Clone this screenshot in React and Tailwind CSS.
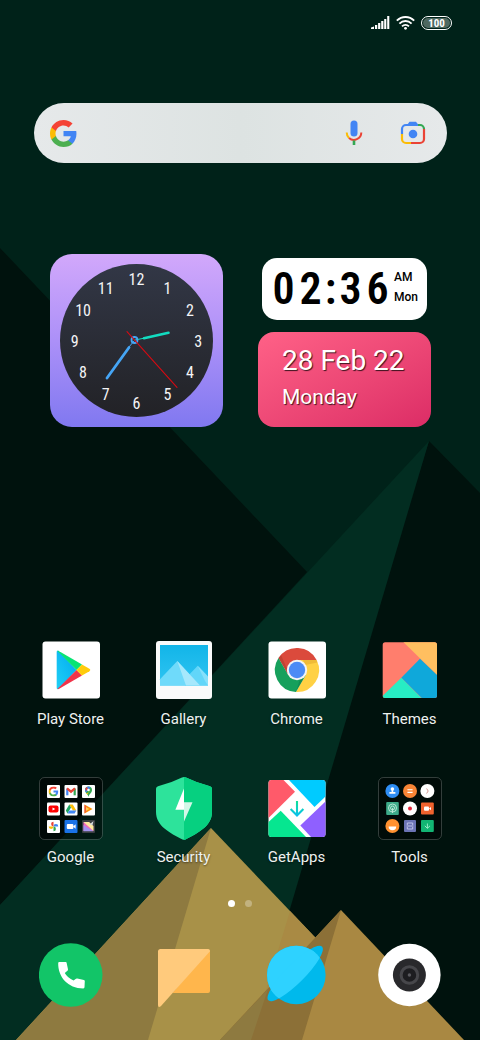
import { useState } from "react";

const hours = [1, 2, 3, 4, 5, 6, 7, 8, 9, 10, 11, 12];

const Wallpaper = () => (
    <svg
        className="absolute inset-0 h-full w-full"
        viewBox="0 0 480 1040"
        preserveAspectRatio="xMidYMid slice"
        aria-hidden="true"
    >
        <rect width="480" height="1040" fill="#002219" />
        <path d="M0 248L307 572L0 905Z" fill="#00120d" />
        <path d="M429 441L480 493V1040H240Z" fill="#00120d" />
        <path d="M429 441L0 905V1040H251Z" fill="#022d21" />
        {/* front mountain */}
        <path d="M211 828L413 1040H16Z" fill="#a89148" />
        <path d="M211 828L148 1040H16Z" fill="#8e7a40" />
        <path d="M290 911L413 1040H251Z" fill="#a98a44" />
        {/* small mountain */}
        <path d="M341 910L464 1040H220Z" fill="#a98842" />
        <path d="M341 910L302 1040H220Z" fill="#8c7037" />
        <path d="M268 989L251 1040H220Z" fill="#8e7a40" />
    </svg>
);

const GoogleG = ({ className, x, y, width, height }) => (
    <svg className={className} x={x} y={y} width={width} height={height} viewBox="1 1 22 22" aria-hidden="true">
        <path fill="#4285f4" d="M22.56 12.25c0-.78-.07-1.53-.2-2.25H12v4.26h5.92c-.26 1.37-1.04 2.53-2.21 3.31v2.77h3.57c2.08-1.92 3.28-4.74 3.28-8.09z" />
        <path fill="#4caf50" d="M12 23c2.97 0 5.46-.98 7.28-2.66l-3.57-2.77c-.98.66-2.23 1.06-3.71 1.06-2.86 0-5.29-1.93-6.16-4.53H2.18v2.84C3.99 20.53 7.7 23 12 23z" />
        <path fill="#fbbc05" d="M5.84 14.09c-.22-.66-.35-1.36-.35-2.09s.13-1.43.35-2.09V7.07H2.18C1.43 8.55 1 10.22 1 12s.43 3.45 1.18 4.93l3.66-2.84z" />
        <path fill="#f44336" d="M12 5.38c1.62 0 3.06.56 4.21 1.64l3.15-3.15C17.45 2.09 14.97 1 12 1 7.7 1 3.99 3.47 2.18 7.07l3.66 2.84c.87-2.6 3.3-4.53 6.16-4.53z" />
    </svg>
);

const MicIcon = () => (
    <svg className="h-7 w-7" viewBox="0 0 28 28" fill="none" strokeWidth="2" aria-hidden="true">
        <rect x="10.5" y="1.5" width="7" height="16" rx="3.5" fill="#4285f4" />
        <path d="M6.7 13.5A7.6 7.6 0 0 0 9 19" stroke="#fbbc05" />
        <path d="M9 19A7.4 7.4 0 0 0 21.3 13.5" stroke="#ea4335" />
        <path d="M14 21.5V26" stroke="#34a853" strokeWidth="2.6" />
    </svg>
);

const LensIcon = () => (
    <svg className="h-7 w-7" viewBox="0 0 28 28" fill="none" strokeWidth="2.2" aria-hidden="true">
        <path d="M3 15V10A4 4 0 0 1 7 6H19" stroke="#4285f4" />
        <path d="M8 6L10.5 2.8H17L19.5 6Z" fill="#4285f4" />
        <path d="M19 6H21A4 4 0 0 1 25 10" stroke="#34a853" />
        <path d="M25 10V20A4 4 0 0 1 21 24H12" stroke="#ea4335" />
        <path d="M12 24H7A4 4 0 0 1 3 20V15" stroke="#fbbc05" />
        <circle cx="14" cy="15" r="4.3" fill="#4285f4" />
    </svg>
);

const StatusBar = () => (
    <header className="flex h-[46px] items-center justify-end gap-[6px] pr-7">
        <svg className="h-[14px] w-[19px]" viewBox="0 0 19 14" fill="#fff" role="img" aria-label="Signal">
            <path d="M0 13V11.6L3 10.6V13Z" />
            <rect x="4" y="9" width="2.2" height="4" />
            <rect x="7.1" y="7" width="2.2" height="6" />
            <rect x="10.2" y="5" width="2.2" height="8" />
            <rect x="13.2" y="3" width="2.1" height="10" />
            <rect x="16.2" y="0" width="2.1" height="13" />
        </svg>
        <svg className="h-[14px] w-[19px]" viewBox="0 0 19 14" fill="none" stroke="#fff" strokeWidth="1.9" role="img" aria-label="Wi-Fi">
            <path d="M.8 4.6C5.8-.2 13.2-.2 18.2 4.6" />
            <path d="M3.4 7.6C7 4.2 12 4.2 15.6 7.6" />
            <path d="M6 10.4C8 8.6 11 8.6 13 10.4" />
            <circle cx="9.5" cy="12.3" r="1.4" fill="#fff" stroke="none" />
        </svg>
        <div className="flex h-[14px] w-[31px] items-center justify-center rounded-full border border-white p-px">
            <span className="flex h-full w-full items-center justify-center rounded-full bg-[#4e6860] font-['Roboto_Condensed',Roboto,sans-serif] text-[11px] leading-none font-bold text-white">
                100
            </span>
        </div>
    </header>
);

const SearchBar = () => {
    const [query, setQuery] = useState("");

    return (
        <form
            onSubmit={(e) => e.preventDefault()}
            className="mr-[33px] ml-[34px] mt-[57px] flex h-[60px] items-center gap-[31px] rounded-full bg-linear-to-r from-[#e6e9ea] via-[#dde3e2] to-[#e6e9ea] pr-5 pl-4"
        >
            <GoogleG className="h-[27px] w-[27px] shrink-0" />
            <input
                type="text"
                aria-label="Search"
                value={query}
                onChange={(e) => setQuery(e.target.value)}
                className="h-full min-w-0 flex-1 bg-transparent text-base text-gray-800 outline-none"
            />
            <button type="button" aria-label="Voice search">
                <MicIcon />
            </button>
            <button type="button" aria-label="Search with camera">
                <LensIcon />
            </button>
        </form>
    );
};

const AnalogClock = () => (
    <div className="h-[173px] w-[173px] overflow-hidden rounded-[22px] bg-linear-to-b from-[#d2a8fb] via-[#ac90f8] to-[#8078f0]">
        <svg
            className="font-['Roboto_Condensed',Roboto,sans-serif]"
            viewBox="0 0 173 173"
            role="img"
            aria-label="Clock"
        >
            <defs>
                <linearGradient id="face" x1="0" y1="0" x2="0" y2="1">
                    <stop offset="0" stopColor="#323746" />
                    <stop offset="1" stopColor="#222226" />
                </linearGradient>
            </defs>
            <circle cx="86.5" cy="86.5" r="76.5" fill="url(#face)" />
            {hours.map((hour) => {
                const angle = (hour * Math.PI) / 6;
                return (
                    <text
                        key={hour}
                        x={86.5 + 61.7 * Math.sin(angle)}
                        y={93 - 61.7 * Math.cos(angle)}
                        textAnchor="middle"
                        fontSize="16"
                        fill="#f4f4f6"
                    >
                        {hour}
                    </text>
                );
            })}
            <g fill="none" strokeLinecap="round">
                <path d="M85 86L95 84" stroke="#12dcc0" strokeWidth="1" />
                <path d="M94 84.3L118.5 78.8" stroke="#12dcc0" strokeWidth="2.6" />
                <path d="M84 87L79 93" stroke="#45a5f5" strokeWidth="1" />
                <path d="M79 93.5L57 124" stroke="#45a5f5" strokeWidth="2.8" />
                <circle cx="84.5" cy="86" r="3" stroke="#45a5f5" strokeWidth="1.8" />
                <path d="M77 77.7L127 133.3" stroke="#d60a12" strokeWidth="1.1" />
            </g>
        </svg>
    </div>
);

const DigitalClock = () => (
    <div className="mx-1 flex h-[62px] items-center rounded-[15px] bg-white pl-2 text-black">
        <div className="flex font-['Roboto_Condensed','Liberation_Sans_Narrow',Roboto,sans-serif] text-[44px] leading-[60px] font-semibold">
            <span className="w-[27px] text-center">0</span>
            <span className="w-[27px] text-center">2</span>
            <span className="w-[13px] text-center">:</span>
            <span className="w-[27px] text-center">3</span>
            <span className="w-[27px] text-center">6</span>
        </div>
        <div className="flex flex-col pb-1 pl-[3px] text-[12px] leading-[20px] font-medium">
            <span>AM</span>
            <span>Mon</span>
        </div>
    </div>
);

const DateCard = () => (
    <div className="h-[95px] rounded-[16px] bg-linear-to-br from-[#ff6187] to-[#dc2c66] pt-[11px] pl-6 text-white [text-shadow:1px_1px_1px_rgba(0,0,0,0.75)]">
        <p className="text-[28px] leading-[36px]">28 Feb 22</p>
        <p className="text-[21px] leading-[36px]">Monday</p>
    </div>
);

const PlayStoreIcon = () => (
    <svg className="h-16 w-16" viewBox="0 0 64 64" aria-hidden="true">
        <defs>
            <linearGradient id="playBlue" x1="1" y1="0" x2="0" y2="1">
                <stop offset="0" stopColor="#00a8f0" />
                <stop offset="1" stopColor="#1fd0f5" />
            </linearGradient>
        </defs>
        <rect x="3.5" y="3.5" width="57.5" height="57" rx="3" fill="#fff" />
        <path d="M17.7 14C17.7 13 18.5 12.6 19.4 13L37.5 32L19.4 51C18.5 51.4 17.7 51 17.7 50Z" fill="url(#playBlue)" />
        <path d="M18.4 13C19 12.7 19.6 12.9 20.2 13.2L43 26.5L37.5 32Z" fill="#08e474" />
        <path d="M18.4 51C19 51.3 19.6 51.1 20.2 50.8L43 37.5L37.5 32Z" fill="#f0344a" />
        <path d="M43 26.5L50.4 30.8C51.5 31.5 51.5 32.5 50.4 33.2L43 37.5L37.5 32Z" fill="#ffcb0b" />
    </svg>
);

const GalleryIcon = () => (
    <svg className="h-16 w-16" viewBox="0 0 64 64" aria-hidden="true">
        <defs>
            <linearGradient id="sky" x1="0" y1="0" x2="0" y2="1">
                <stop offset="0" stopColor="#12b5e8" />
                <stop offset="1" stopColor="#30c4f2" />
            </linearGradient>
        </defs>
        <rect x="4" y="3" width="56" height="58" rx="3" fill="#fafafa" />
        <rect x="8" y="7" width="48" height="40.5" fill="url(#sky)" />
        <path d="M33 41L45.7 27.7L56 38.5V47.5H33Z" fill="#62d6f9" />
        <path d="M45.7 27.7L56 38.5V47.5L53 43Z" fill="#86e0fb" />
        <path d="M8 41.3L25.3 23L48 47.5H8Z" fill="#6fdafa" />
        <path d="M25.3 23L48 47.5H34Z" fill="#a6e8fc" />
    </svg>
);

const ChromeIcon = () => (
    <svg className="h-16 w-16" viewBox="0 0 64 64" aria-hidden="true">
        <rect x="3.5" y="3.5" width="57.5" height="57" rx="3" fill="#fff" />
        <path d="M13.5 20A22 22 0 0 1 51.6 22H32L23.3 37Z" fill="#db4a3c" />
        <path d="M51.6 22A22 22 0 0 1 30.9 54L40.7 37L32 22Z" fill="#ffd144" />
        <path d="M30.9 54A22 22 0 0 1 13.5 20L23.3 37H40.7Z" fill="#16a05c" />
        <path d="M38 22H51.6L52.5 24.5L40 27Z" fill="#e5ac30" opacity=".6" />
        <path d="M13.5 20L23.3 37L22 31L16 17Z" fill="#a93a2c" opacity=".5" />
        <path d="M30.9 54L40.7 37L35 41Z" fill="#0d7a45" opacity=".5" />
        <circle cx="32" cy="32" r="10.2" fill="#f4f4f4" />
        <circle cx="32" cy="32" r="8.2" fill="#4c8bf5" />
    </svg>
);

const ThemesIcon = () => (
    <svg className="h-16 w-16" viewBox="0 0 64 64" aria-hidden="true">
        <clipPath id="themesTile">
            <rect x="4.7" y="4.3" width="54.3" height="55.7" rx="2.5" />
        </clipPath>
        <g clipPath="url(#themesTile)">
            <rect width="64" height="64" fill="#ff7e6d" />
            <path d="M25.3 4H60V38Z" fill="#ffbf60" />
            <path d="M42 20.7L60 38V60H43.7L23.3 39.7Z" fill="#0fa8da" />
            <path d="M23.3 39.7L43.7 60.5H2Z" fill="#27edc4" />
        </g>
    </svg>
);

const GoogleFolderIcon = () => (
    <svg className="h-16 w-16" viewBox="0 0 64 64" aria-hidden="true">
        <rect x=".5" y="1.5" width="63" height="62" rx="5" fill="#000" fillOpacity=".45" stroke="#fff" strokeOpacity=".2" />
        <g fill="#fff">
            <rect x="8" y="9" width="13" height="13" rx="1" />
            <rect x="25.5" y="9" width="13" height="13" rx="1" />
            <rect x="43" y="9" width="13" height="13" rx="1" />
            <rect x="8" y="26.5" width="13" height="13" rx="1" />
            <rect x="25.5" y="26.5" width="13" height="13" rx="1" />
            <rect x="43" y="26.5" width="13" height="13" rx="1" />
            <rect x="8" y="44" width="13" height="13" rx="1" />
        </g>
        <GoogleG x="9.5" y="10.5" width="10" height="10" />
        {/* Gmail */}
        <g fill="none" strokeWidth="2.2">
            <path d="M28.3 19.3V12.5" stroke="#4285f4" />
            <path d="M35.7 19.3V12.5" stroke="#34a853" />
            <path d="M28 12.4L32 15.7L36 12.4" stroke="#ea4335" />
        </g>
        {/* Maps */}
        <path d="M49.5 21C49 18 46 17 46 14A3.5 3.5 0 0 1 53 14C53 17 50 18 49.5 21Z" fill="#34a853" />
        <path d="M46 14A3.5 3.5 0 0 1 51.5 11.2L47.2 16.6Q46 15.4 46 14Z" fill="#4285f4" />
        <path d="M46.3 12.6L48 10.9L49 13L47 15Z" fill="#ea4335" />
        <path d="M49.6 16.5L47.2 17.2L48.4 18.6L52.6 12.6Z" fill="#fbbc05" />
        <circle cx="49.5" cy="14" r="1.3" fill="#fff" />
        {/* YouTube */}
        <rect x="9.5" y="29.5" width="10" height="7" rx="2" fill="#f00" />
        <path d="M13.5 31.5L16.3 33L13.5 34.5Z" fill="#fff" />
        {/* Drive */}
        <path d="M30.3 28.5H33.7L37.3 34.5H33.9Z" fill="#fbbc05" />
        <path d="M30.3 28.5L32 31.5L28.5 37.5L26.8 34.5Z" fill="#1ea362" />
        <path d="M30.3 34.5H37.3L35.6 37.5H28.5Z" fill="#4285f4" />
        {/* Play games */}
        <path d="M45.5 28.5L53.5 33L45.5 37.5Z" fill="#ff9100" />
        <path d="M45.5 28.5L49.5 33L45.5 37.5Z" fill="#ef5a3c" />
        <path d="M47 31L50.3 33L47 35Z" fill="#ffd24d" />
        {/* Photos */}
        <path d="M14.5 50.5V45.7A2.4 2.4 0 0 0 14.5 50.5Z" fill="#ea4335" />
        <path d="M14.5 50.5H19.3A2.4 2.4 0 0 0 14.5 50.5Z" fill="#4285f4" />
        <path d="M14.5 50.5V55.3A2.4 2.4 0 0 0 14.5 50.5Z" fill="#34a853" />
        <path d="M14.5 50.5H9.7A2.4 2.4 0 0 0 14.5 50.5Z" fill="#fbbc05" />
        {/* Duo */}
        <rect x="25.5" y="44" width="13" height="13" rx="1" fill="#1a73e8" />
        <rect x="27.8" y="48" width="6.6" height="5" rx="1" fill="#fff" />
        <path d="M34 50.5L36.6 48.3V52.7Z" fill="#fff" />
        {/* Photo editor */}
        <rect x="43" y="44" width="13" height="13" rx="1" fill="#3b3f42" />
        <path d="M44.5 46H50L54.5 55H44.5Z" fill="#f36ac0" />
        <path d="M44.5 46H50L54.5 50V55Z" fill="#ffe9a0" />
        <path d="M44.5 49L54.5 55.3H44.5Z" fill="#a493f0" />
        <path d="M50.5 48.5L54.5 45L53.5 49Z" fill="#d8dcde" />
    </svg>
);

const SecurityIcon = () => (
    <svg className="h-16 w-16" viewBox="0 0 64 64" aria-hidden="true">
        <path d="M30 1.6Q32 .6 34 1.6Q45 7.2 58 10.2Q60 10.8 60 12.8V36C60 50 46 57 33.5 63.4Q32 64.2 30.5 63.4C18 57 4 50 4 36V12.8Q4 10.8 6 10.2Q19 7.2 30 1.6Z" fill="#2de39b" />
        <path d="M32 1Q33 1 34 1.6Q45 7.2 58 10.2Q60 10.8 60 12.8V36C60 50 46 57 33.5 63.4Q32.6 64 32 64Z" fill="#06d080" />
        <path d="M32 12.5V33.8H23.4Z" fill="#fff" />
        <path d="M32 26.2H40.5L32 45.5Z" fill="#d3f7e8" />
    </svg>
);

const GetAppsIcon = () => (
    <svg className="h-16 w-16" viewBox="0 0 64 64" aria-hidden="true">
        <clipPath id="getAppsTile">
            <rect x="3.5" y="4" width="57" height="57" rx="3" />
        </clipPath>
        <linearGradient id="getAppsArrow" gradientUnits="userSpaceOnUse" x1="0" y1="25" x2="0" y2="41">
            <stop offset="0" stopColor="#0ee295" />
            <stop offset="1" stopColor="#08bdf5" />
        </linearGradient>
        <g clipPath="url(#getAppsTile)">
            <rect width="64" height="64" fill="#fff" />
            <path d="M3 4H18.5L30 15.7L3 42.5Z" fill="#ff5a6a" />
            <path d="M24 4H61V20L49.5 31Z" fill="#00cbff" />
            <path d="M61 25V61H46L35.3 49.5Z" fill="#8f60ff" />
            <path d="M3 46.5L15.7 34.7L41 61H3Z" fill="#06e690" />
        </g>
        <path d="M32 25V40M25.6 33L32 39.5L38.4 33" fill="none" stroke="url(#getAppsArrow)" strokeWidth="2.1" />
    </svg>
);

const ToolsFolderIcon = () => (
    <svg className="h-16 w-16" viewBox="0 0 64 64" aria-hidden="true">
        <rect x=".5" y="1.5" width="63" height="62" rx="5" fill="#000" fillOpacity=".35" stroke="#fff" strokeOpacity=".2" />
        {/* contacts */}
        <circle cx="14.4" cy="15" r="7" fill="#2f8ef5" />
        <circle cx="14.4" cy="13" r="1.8" fill="#fff" />
        <path d="M13.6 13.5H15.2V16H17.4V17.8H11.4V16H13.6Z" fill="#fff" />
        {/* calculator */}
        <circle cx="32" cy="15" r="7" fill="#f98436" />
        <path d="M29.4 13.8H34.6M29.4 16.4H34.6" stroke="#fff" strokeWidth="1.1" />
        {/* compass */}
        <circle cx="49.4" cy="15" r="7" fill="#fff" />
        <path d="M48.6 12.5L50.2 15L48.6 17.5" fill="none" stroke="#c97d77" strokeWidth=".8" />
        {/* radio */}
        <rect x="8.2" y="26" width="12.6" height="13" rx="1" fill="#3dab89" />
        <g fill="none" stroke="#c3ecdd" strokeWidth=".9">
            <circle cx="14.5" cy="32" r="4" />
            <circle cx="14.5" cy="32" r="2" />
            <path d="M14.5 32V37" />
        </g>
        {/* recorder */}
        <circle cx="32" cy="32.5" r="7" fill="#fff" />
        <circle cx="32" cy="32.5" r="2" fill="#e5263b" />
        {/* screen recorder */}
        <rect x="43" y="26.4" width="12.8" height="12.2" rx="1" fill="#f0622e" />
        <rect x="46" y="30.4" width="5" height="4.4" rx="1" fill="#fff" />
        <path d="M51 32.6L53 30.9V34.3Z" fill="#fff" />
        {/* community */}
        <circle cx="14.4" cy="50" r="7" fill="#ff9130" />
        <path d="M10.6 50.5H18.2A3.8 3.8 0 0 1 10.6 50.5Z" fill="#fff" />
        {/* scanner */}
        <rect x="26" y="44" width="12" height="12" rx="1" fill="#6b73b5" />
        <path d="M29.3 49V47H34.7V49M29.3 51V53H34.7V51M28.6 50H35.4" fill="none" stroke="#c7cbee" strokeWidth=".9" />
        {/* downloads */}
        <rect x="43" y="44" width="12.8" height="12" rx="1" fill="#12b573" />
        <path d="M49.4 47.5V52M46.8 49.8L49.4 52.4L52 49.8" fill="none" stroke="#a6efcf" strokeWidth=".9" />
    </svg>
);

const PhoneIcon = () => (
    <svg className="h-16 w-16" viewBox="0 0 64 64" aria-hidden="true">
        <circle cx="31.7" cy="32" r="31.8" fill="#12c568" />
        <path d="M20.2 19H26.8Q27.5 19 27.6 19.8L29 26.2Q29.1 27.2 28.4 27.8L25.8 30Q28.5 35 34.6 37.4L36.6 35.9Q37.3 35.4 38.3 35.6L44.9 36.9Q45.9 37.1 45.8 38L45.5 44.3Q45.4 45.4 44.3 45.4C29 45.4 18.8 34 19.2 20Q19.3 19 20.2 19Z" fill="#fff" />
    </svg>
);

const MessagesIcon = () => (
    <svg className="h-16 w-16" viewBox="0 0 64 64" aria-hidden="true">
        <path d="M20.7 50H56Q58 50 58 48V8L56 6Z" fill="#ffb64c" />
        <path d="M8.5 6H56Q58 6 58 8.2L8.8 63.2Q6 65 6 62V8.5Q6 6 8.5 6Z" fill="#ffca7c" />
    </svg>
);

const BrowserIcon = () => (
    <svg className="h-16 w-16" viewBox="0 0 64 64" aria-hidden="true">
        <clipPath id="planet">
            <circle cx="31.3" cy="32" r="29.3" />
        </clipPath>
        <circle cx="31.3" cy="32" r="29.3" fill="#00b9ec" />
        <ellipse cx="30.2" cy="30.5" rx="38" ry="9.5" transform="rotate(-45 30.2 30.5)" fill="#00b9ec" />
        <g clipPath="url(#planet)" fill="#2ed2ff">
            <path d="M-10 -10H70.7L-10 70.7Z" />
            <ellipse cx="30.2" cy="30.5" rx="38" ry="9.5" transform="rotate(-45 30.2 30.5)" />
        </g>
    </svg>
);

const CameraIcon = () => (
    <svg className="h-16 w-16" viewBox="0 0 64 64" aria-hidden="true">
        <circle cx="31.4" cy="32" r="31.2" fill="#fff" />
        <circle cx="31.4" cy="32" r="16.5" fill="#29292c" />
        <circle cx="31.4" cy="32" r="8.3" fill="#1d1d20" stroke="#47474b" strokeWidth="3" />
        <circle cx="31.4" cy="32" r="1.7" fill="#5a5a5f" />
    </svg>
);

const apps = [
    { name: "Play Store", Icon: PlayStoreIcon },
    { name: "Gallery", Icon: GalleryIcon },
    { name: "Chrome", Icon: ChromeIcon },
    { name: "Themes", Icon: ThemesIcon },
    { name: "Google", Icon: GoogleFolderIcon },
    { name: "Security", Icon: SecurityIcon },
    { name: "GetApps", Icon: GetAppsIcon },
    { name: "Tools", Icon: ToolsFolderIcon },
];

const dock = [
    { name: "Phone", Icon: PhoneIcon },
    { name: "Messages", Icon: MessagesIcon },
    { name: "Browser", Icon: BrowserIcon },
    { name: "Camera", Icon: CameraIcon },
];

const App = () => {
    const [page, setPage] = useState(0);

    return (
        <div className="relative min-h-screen overflow-hidden bg-[#002219] font-[Roboto,sans-serif]">
            <Wallpaper />
            <div className="relative flex min-h-screen flex-col">
                <StatusBar />
                <SearchBar />

                <section className="mt-[91px] flex justify-between pr-[49px] pl-[50px]">
                    <AnalogClock />
                    <div className="flex w-[173px] flex-col gap-3 pt-1">
                        <DigitalClock />
                        <DateCard />
                    </div>
                </section>

                <main className="mt-auto grid grid-cols-4 gap-y-[47px] px-[14px] pt-12">
                    {apps.map(({ name, Icon }) => (
                        <button key={name} type="button" className="flex flex-col items-center gap-[7px]">
                            <Icon />
                            <span className="text-[15px] leading-[20px] whitespace-nowrap text-[#eef2f0] [text-shadow:0_1px_2px_rgba(0,0,0,0.5)]">
                                {name}
                            </span>
                        </button>
                    ))}
                </main>

                <div className="flex justify-center gap-[10px] pt-[33px]">
                    {[0, 1].map((dot) => (
                        <button
                            key={dot}
                            type="button"
                            aria-label={`Page ${dot + 1}`}
                            onClick={() => setPage(dot)}
                            className={`h-[7px] w-[7px] rounded-full ${page === dot ? "bg-white" : "bg-white/30"}`}
                        />
                    ))}
                </div>

                <nav className="grid grid-cols-4 px-[14px] pt-9 pb-[33px]">
                    {dock.map(({ name, Icon }) => (
                        <button key={name} type="button" aria-label={name} className="flex justify-center">
                            <Icon />
                        </button>
                    ))}
                </nav>
            </div>
        </div>
    );
};

export default App;
